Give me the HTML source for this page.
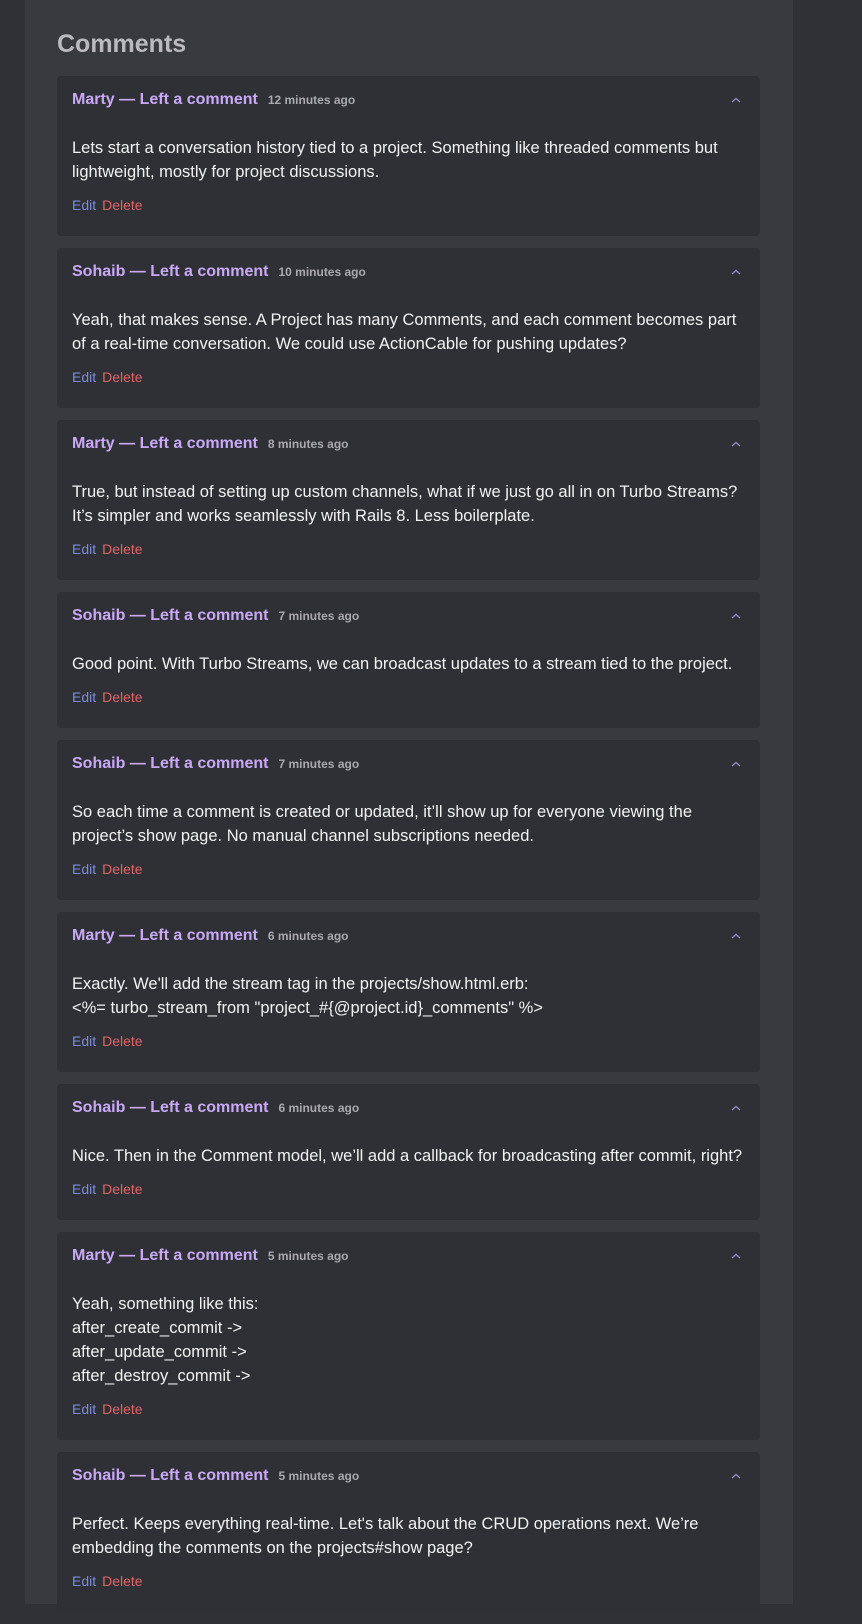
<!DOCTYPE html>
<html><head><meta charset="utf-8"><style>
*{margin:0;padding:0;box-sizing:border-box}
html,body{width:862px;height:1604px;overflow:hidden;background:#303136;font-family:"Liberation Sans",sans-serif}
.panel{position:absolute;left:25px;top:0;width:768px;height:1604px;background:#393a40}
h1{position:absolute;left:57px;top:30px;font-size:25px;line-height:28px;color:#b9b9be;font-weight:bold}
.list{position:absolute;left:57px;top:76px;width:703px}
.card{background:#2f3035;border-radius:4px;padding:15px 15px 21px;margin-bottom:12px;position:relative}
.hd{height:18px;line-height:18px;white-space:nowrap}
.nm{color:#c9a9f7;font-weight:bold;font-size:16px}
.tm{color:#a9a9af;font-weight:bold;font-size:12px;margin-left:10px}
.chev{position:absolute;right:19px;top:21px}
.bd{margin-top:27px;color:#f2f2f2;font-size:16.5px;line-height:24px;white-space:nowrap}
.ln{margin-top:11px;height:20px;line-height:20px;font-size:14px}
.ed{color:#7b8bd8}.dl{color:#e36464;margin-left:6px}
</style></head><body>
<div class="panel"></div>
<h1>Comments</h1>
<div class="list">
<div class="card"><div class="hd"><span class="nm">Marty — Left a comment</span><span class="tm">12 minutes ago</span></div><svg class="chev" width="10" height="6" viewBox="0 0 10 6"><path d="M1 5L5 1.5L9 5" fill="none" stroke="#9a8ac8" stroke-width="1.3"/></svg><div class="bd">Lets start a conversation history tied to a project. Something like threaded comments but<br>lightweight, mostly for project discussions.</div><div class="ln"><span class="ed">Edit</span><span class="dl">Delete</span></div></div>
<div class="card"><div class="hd"><span class="nm">Sohaib — Left a comment</span><span class="tm">10 minutes ago</span></div><svg class="chev" width="10" height="6" viewBox="0 0 10 6"><path d="M1 5L5 1.5L9 5" fill="none" stroke="#9a8ac8" stroke-width="1.3"/></svg><div class="bd">Yeah, that makes sense. A Project has many Comments, and each comment becomes part<br>of a real-time conversation. We could use ActionCable for pushing updates?</div><div class="ln"><span class="ed">Edit</span><span class="dl">Delete</span></div></div>
<div class="card"><div class="hd"><span class="nm">Marty — Left a comment</span><span class="tm">8 minutes ago</span></div><svg class="chev" width="10" height="6" viewBox="0 0 10 6"><path d="M1 5L5 1.5L9 5" fill="none" stroke="#9a8ac8" stroke-width="1.3"/></svg><div class="bd">True, but instead of setting up custom channels, what if we just go all in on Turbo Streams?<br>It’s simpler and works seamlessly with Rails 8. Less boilerplate.</div><div class="ln"><span class="ed">Edit</span><span class="dl">Delete</span></div></div>
<div class="card"><div class="hd"><span class="nm">Sohaib — Left a comment</span><span class="tm">7 minutes ago</span></div><svg class="chev" width="10" height="6" viewBox="0 0 10 6"><path d="M1 5L5 1.5L9 5" fill="none" stroke="#9a8ac8" stroke-width="1.3"/></svg><div class="bd">Good point. With Turbo Streams, we can broadcast updates to a stream tied to the project.</div><div class="ln"><span class="ed">Edit</span><span class="dl">Delete</span></div></div>
<div class="card"><div class="hd"><span class="nm">Sohaib — Left a comment</span><span class="tm">7 minutes ago</span></div><svg class="chev" width="10" height="6" viewBox="0 0 10 6"><path d="M1 5L5 1.5L9 5" fill="none" stroke="#9a8ac8" stroke-width="1.3"/></svg><div class="bd">So each time a comment is created or updated, it’ll show up for everyone viewing the<br>project’s show page. No manual channel subscriptions needed.</div><div class="ln"><span class="ed">Edit</span><span class="dl">Delete</span></div></div>
<div class="card"><div class="hd"><span class="nm">Marty — Left a comment</span><span class="tm">6 minutes ago</span></div><svg class="chev" width="10" height="6" viewBox="0 0 10 6"><path d="M1 5L5 1.5L9 5" fill="none" stroke="#9a8ac8" stroke-width="1.3"/></svg><div class="bd">Exactly. We'll add the stream tag in the projects/show.html.erb:<br>&lt;%= turbo_stream_from "project_#{@project.id}_comments" %&gt;</div><div class="ln"><span class="ed">Edit</span><span class="dl">Delete</span></div></div>
<div class="card"><div class="hd"><span class="nm">Sohaib — Left a comment</span><span class="tm">6 minutes ago</span></div><svg class="chev" width="10" height="6" viewBox="0 0 10 6"><path d="M1 5L5 1.5L9 5" fill="none" stroke="#9a8ac8" stroke-width="1.3"/></svg><div class="bd">Nice. Then in the Comment model, we’ll add a callback for broadcasting after commit, right?</div><div class="ln"><span class="ed">Edit</span><span class="dl">Delete</span></div></div>
<div class="card"><div class="hd"><span class="nm">Marty — Left a comment</span><span class="tm">5 minutes ago</span></div><svg class="chev" width="10" height="6" viewBox="0 0 10 6"><path d="M1 5L5 1.5L9 5" fill="none" stroke="#9a8ac8" stroke-width="1.3"/></svg><div class="bd">Yeah, something like this:<br>after_create_commit -&gt;<br>after_update_commit -&gt;<br>after_destroy_commit -&gt;</div><div class="ln"><span class="ed">Edit</span><span class="dl">Delete</span></div></div>
<div class="card"><div class="hd"><span class="nm">Sohaib — Left a comment</span><span class="tm">5 minutes ago</span></div><svg class="chev" width="10" height="6" viewBox="0 0 10 6"><path d="M1 5L5 1.5L9 5" fill="none" stroke="#9a8ac8" stroke-width="1.3"/></svg><div class="bd">Perfect. Keeps everything real-time. Let's talk about the CRUD operations next. We’re<br>embedding the comments on the projects#show page?</div><div class="ln"><span class="ed">Edit</span><span class="dl">Delete</span></div></div>
</div>
</body></html>
